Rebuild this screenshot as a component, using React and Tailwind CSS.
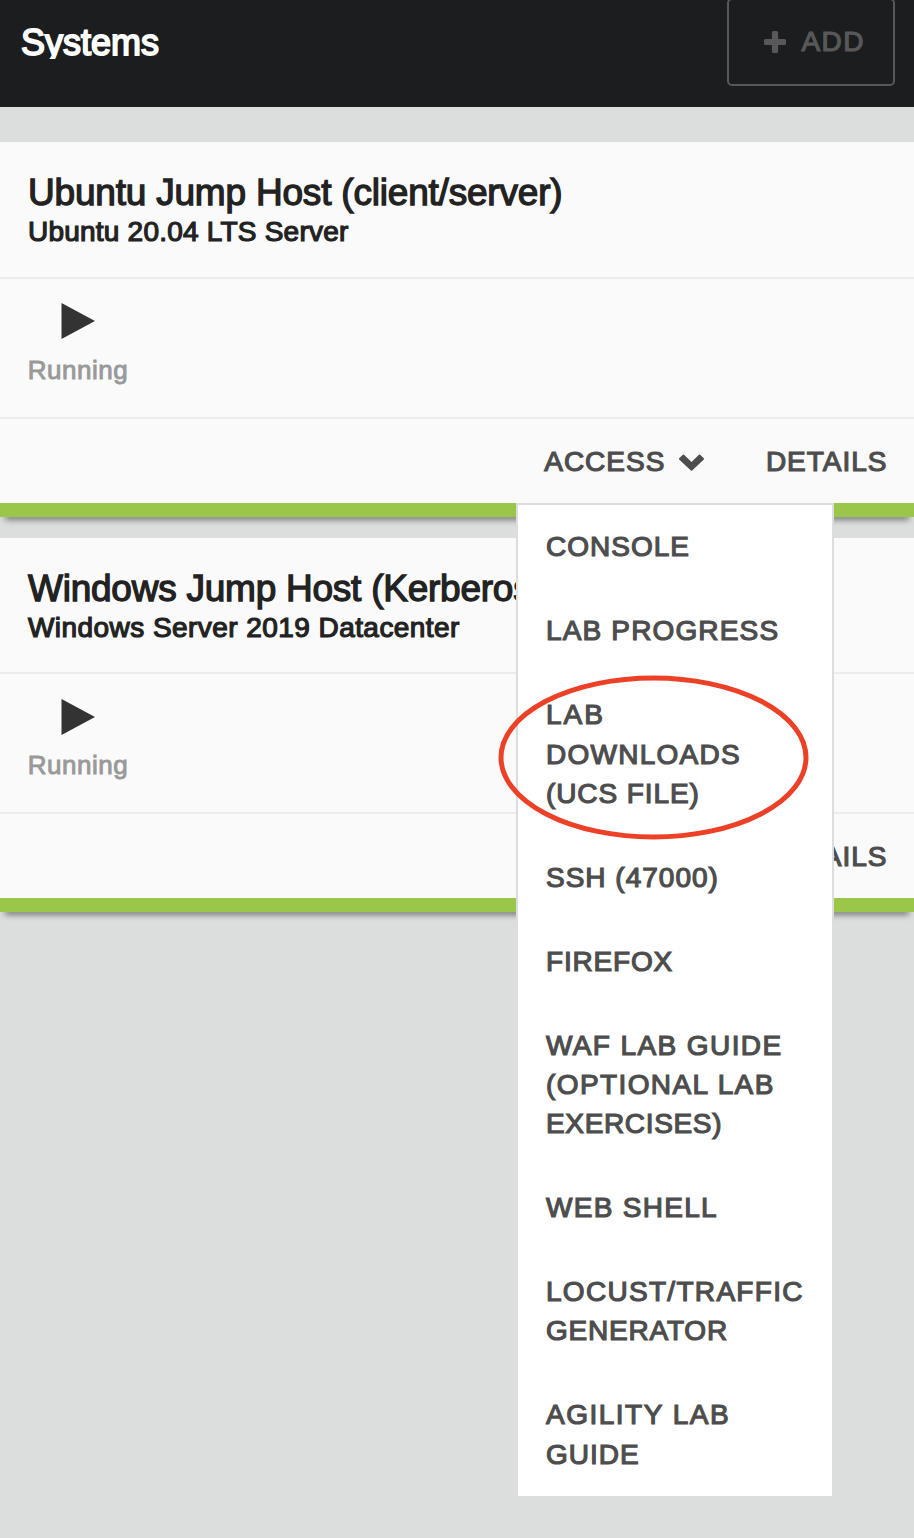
const menuItems = [
  [["CONSOLE", "tracking-[1px]"]],
  [["LAB PROGRESS", "tracking-[1.15px]"]],
  [
    ["LAB", "tracking-[2px]"],
    ["DOWNLOADS", "tracking-[1.25px]"],
    ["(UCS FILE)", "tracking-[0.9px]"],
  ],
  [["SSH (47000)", "tracking-[1px]"]],
  [["FIREFOX", "tracking-[0.8px]"]],
  [
    ["WAF LAB GUIDE", "tracking-[1.4px]"],
    ["(OPTIONAL LAB", "tracking-[1.4px]"],
    ["EXERCISES)", "tracking-[0.65px]"],
  ],
  [["WEB SHELL", "tracking-[1.3px]"]],
  [
    ["LOCUST/TRAFFIC", "tracking-[1.3px]"],
    ["GENERATOR", "tracking-[0.8px]"],
  ],
  [
    ["AGILITY LAB", "tracking-[1.5px]"],
    ["GUIDE", "tracking-[1px]"],
  ],
];

function PlusIcon() {
  return (
    <svg className="-mt-px h-[22px] w-[22px]" viewBox="0 0 22 22" fill="currentColor">
      <path d="M9.400 0h3.200a1.500 1.500 0 0 1 1.500 1.500v6.400h6.400a1.500 1.500 0 0 1 1.500 1.500v3.200a1.500 1.500 0 0 1 -1.500 1.500h-6.400v6.400a1.500 1.500 0 0 1 -1.500 1.500h-3.200a1.500 1.500 0 0 1 -1.500 -1.500v-6.400h-6.400a1.500 1.500 0 0 1 -1.500 -1.500v-3.200a1.500 1.500 0 0 1 1.500 -1.500h6.400v-6.400a1.500 1.500 0 0 1 1.500 -1.500z" />
    </svg>
  );
}

function ChevronIcon() {
  return (
    <svg className="mt-0.5 h-[17px] w-[25px]" viewBox="0 0 25 17" fill="currentColor">
      <path d="M.4 4 3.600.9a1.200 1.200 0 0 1 1.700 0L12.500 8l7.200-7.100a1.200 1.200 0 0 1 1.700 0L24.600 4a1.200 1.200 0 0 1 0 1.700L13.100 16.600a.9.900 0 0 1-1.200 0L.4 5.700A1.200 1.200 0 0 1 .4 4z" />
    </svg>
  );
}

function Menu() {
  return (
    <ul className="absolute top-[84px] left-[516px] z-20 w-[318px] border-2 border-[#dcdedd] bg-white">
      {menuItems.map((lines) => (
        <li key={lines[0][0]} className="px-7 py-[22.4px] text-[28px] leading-[39.2px] whitespace-nowrap">
          {lines.map(([text, tracking]) => (
            <div key={text} className={tracking}>{text}</div>
          ))}
        </li>
      ))}
      <svg className="absolute top-[169px] left-[-21px] h-[168px] w-[314px]" viewBox="0 0 314 168" fill="none">
        <ellipse cx="156.500" cy="83.500" rx="152.500" ry="79.500" stroke="#ec4027" strokeWidth="5" />
      </svg>
    </ul>
  );
}

function SystemCard({ name, nameTracking, os, osTracking, open }) {
  return (
    <section className="mb-[20.5px]">
      <div className="relative bg-[#fafafa]">
        <header className="h-[136.7px] border-b-2 border-[#ebecec] px-7 pt-[31px] whitespace-nowrap text-[#222]">
          <h2 className={`text-[37px] leading-[40px] [-webkit-text-stroke:1.3px] ${nameTracking}`}>{name}</h2>
          <h3 className={`text-[28px] leading-[38px] [-webkit-text-stroke:1.2px] ${osTracking}`}>{os}</h3>
        </header>
        <div className="flex h-[140px] flex-col items-start border-b-2 border-[#ebecec] px-7 pt-[24.3px]">
          <div className="flex w-[100px] flex-col items-center">
            <svg className="h-9 w-[34px]" viewBox="0 0 34 36">
              <path d="M.5 0 34 18 .5 36z" fill="#333" />
            </svg>
            <div className="mt-[15.7px] text-[26px] leading-[30px] tracking-[0.5px] text-[#999] [-webkit-text-stroke:0.9px]">Running</div>
          </div>
        </div>
        <footer className="relative flex h-[84px] items-center justify-end pt-px pr-[26.500px] text-[28px] tracking-[1px]">
          <div className="mr-[62px] flex items-center gap-[13.500px]">
            <span>ACCESS</span>
            <ChevronIcon />
          </div>
          <span>DETAILS</span>
          {open && <Menu />}
        </footer>
      </div>
      <div className="h-[14px] bg-[#9ac64a] shadow-[0_7px_6px_-5px_rgba(0,0,0,0.7)]" />
    </section>
  );
}

export default function App() {
  return (
    <main className="h-[1538px] w-[914px] overflow-hidden bg-[#dcdedd] font-['Liberation_Sans',Arial,sans-serif] text-[#4d4d4d] [-webkit-text-stroke:1.2px]">
      <div className="flex h-[107px] items-start justify-between bg-[#1b1d1f] pr-[19px] pl-[21px]">
        <h1 className="mt-[23px] h-9 overflow-hidden text-[36px] leading-[40px] text-white [-webkit-text-stroke:1.8px]">Systems</h1>
        <button className="-mt-0.5 flex h-[88px] w-[168px] items-center justify-center gap-[15.500px] rounded-[5px] border-2 border-[#58585a] pl-[7px] text-[28px] tracking-[1.5px] text-[#58585a]">
          <PlusIcon />
          <span>ADD</span>
        </button>
      </div>
      <div className="pt-[35.4px]">
        <SystemCard
          name="Ubuntu Jump Host (client/server)"
          nameTracking="tracking-[-0.2px]"
          os="Ubuntu 20.04 LTS Server"
          osTracking="tracking-[0.22px]"
          open
        />
        <SystemCard
          name="Windows Jump Host (Kerberos)"
          nameTracking="tracking-[-0.24px]"
          os="Windows Server 2019 Datacenter"
          osTracking="tracking-[0.44px]"
        />
      </div>
    </main>
  );
}
